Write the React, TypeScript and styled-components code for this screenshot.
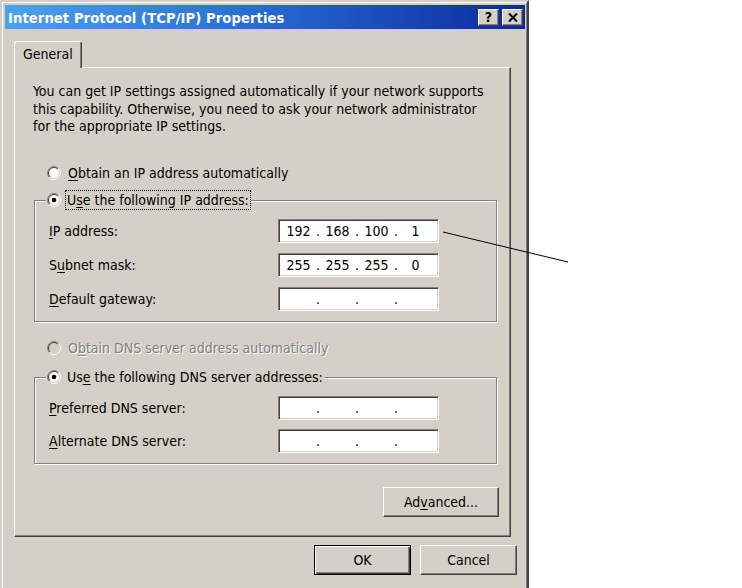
import React from 'react';
import styled, { createGlobalStyle } from 'styled-components';

const GlobalStyle = createGlobalStyle`
  html, body {
    margin: 0;
    padding: 0;
    background: #fff;
    overflow: hidden;
  }
  body {
    font-family: "DejaVu Sans Condensed", "DejaVu Sans", sans-serif;
    font-size: 14px;
    color: #000;
  }
`;

const Page = styled.div`
  position: relative;
  width: 742px;
  height: 588px;
  overflow: hidden;
  background: #fff;
`;

const Window = styled.div`
  box-sizing: border-box;
  width: 529px;
  height: 600px;
  display: flex;
  flex-direction: column;
  background: #d4d0c8;
  border: 2px solid;
  border-color: #d4d0c8 #404040 #404040 #d4d0c8;
  box-shadow: inset 1px 1px #fff, inset -1px -1px #808080;
  padding: 3px 2px 0 3px;
`;

const TitleBar = styled.div`
  height: 24px;
  display: flex;
  align-items: center;
  justify-content: space-between;
  padding: 0 2px 0 3px;
  background: linear-gradient(90deg, #4ba2ea 0%, #2b6fd4 45%, #0a2a9c 100%);
`;

const Title = styled.div`
  color: #fff;
  font-weight: bold;
  font-size: 14.6px;
  letter-spacing: 0.1px;
`;

const TitleButtons = styled.div`
  display: flex;
  gap: 3px;
`;

const CaptionButton = styled.div`
  box-sizing: border-box;
  width: 21px;
  height: 17px;
  display: flex;
  align-items: center;
  justify-content: center;
  background: #d4d0c8;
  border: 1px solid;
  border-color: #fff #404040 #404040 #fff;
  box-shadow: inset -1px -1px #808080;
  font-weight: bold;
  font-size: 14px;
  line-height: 1;
`;

const Body = styled.div`
  display: flex;
  flex-direction: column;
  padding: 12px 0 0 9px;
`;

const TabStrip = styled.div`
  display: flex;
  position: relative;
  z-index: 1;
`;

const Tab = styled.div`
  box-sizing: border-box;
  width: 68px;
  height: 27px;
  margin-bottom: -1px;
  padding: 3px 0 0 8px;
  line-height: 18px;
  background: #d4d0c8;
  border: 1px solid;
  border-bottom: none;
  border-color: #fff #404040 transparent #fff;
  border-top-left-radius: 3px;
  border-top-right-radius: 2px;
  box-shadow: inset -1px 0 #808080;
`;

const TabPanel = styled.div`
  box-sizing: border-box;
  width: 497px;
  display: flex;
  flex-direction: column;
  align-items: flex-start;
  padding: 15px 12px 19px 18px;
  border: 1px solid;
  border-color: #fff #404040 #404040 #fff;
  box-shadow: inset -1px -1px #808080;
`;

const Intro = styled.p`
  margin: 0;
  line-height: 17.5px;
`;

const RadioRow = styled.div<{ $top: number; $disabled?: boolean }>`
  display: flex;
  align-items: center;
  gap: 7px;
  height: 18px;
  margin: ${(p) => p.$top}px 0 0 14px;
  color: ${(p) => (p.$disabled ? '#808080' : '#000')};
  text-shadow: ${(p) => (p.$disabled ? '1px 1px #fff' : 'none')};
`;

const Group = styled.div<{ $top: number; $gap: number }>`
  position: relative;
  box-sizing: border-box;
  width: 463px;
  margin: ${(p) => p.$top}px 0 0 1px;
  padding: 18px 0 10px 14px;
  border: 1px solid #808080;
  box-shadow: inset 1px 1px #fff, 1px 1px #fff;
  display: grid;
  grid-template-columns: 229px 161px;
  row-gap: ${(p) => p.$gap}px;
  align-items: center;
`;

const Legend = styled.div`
  position: absolute;
  top: -11px;
  left: 11px;
  height: 20px;
  display: flex;
  align-items: center;
  gap: 4px;
  padding: 0 0 0 1px;
  background: #d4d0c8;
`;

const LegendText = styled.span<{ $focused?: boolean }>`
  box-sizing: border-box;
  height: 20px;
  line-height: 18px;
  padding: 0 1px;
  border: 1px dotted ${(p) => (p.$focused ? '#000' : 'transparent')};
`;

const Label = styled.div`
  line-height: 18px;
`;

const IpField = styled.div`
  box-sizing: border-box;
  width: 161px;
  height: 24px;
  display: flex;
  align-items: center;
  padding-left: 3px;
  background: #fff;
  border: 1px solid;
  border-color: #808080 #fff #fff #808080;
  box-shadow: inset 1px 1px #404040, inset -1px -1px #d4d0c8;
`;

const Octet = styled.span`
  width: 33px;
  text-align: center;
`;

const Dot = styled.span`
  width: 6px;
  text-align: center;
`;

const Button = styled.div<{ $width: number; $default?: boolean }>`
  box-sizing: border-box;
  width: ${(p) => p.$width}px;
  height: 30px;
  display: flex;
  align-items: center;
  justify-content: center;
  background: #d4d0c8;
  border: 1px solid;
  border-color: ${(p) => (p.$default ? '#000' : '#fff #404040 #404040 #fff')};
  box-shadow: ${(p) =>
    p.$default
      ? 'inset 1px 1px #fff, inset -1px -1px #404040, inset -2px -2px #808080'
      : 'inset -1px -1px #808080'};
`;

const AdvancedButton = styled(Button)`
  align-self: flex-end;
  margin-top: 23px;
  margin-right: -1px;
`;

const ButtonRow = styled.div`
  display: flex;
  justify-content: flex-end;
  gap: 9px;
  margin: 8px 8px 0 0;
`;

const Key = styled.span`
  text-decoration: underline;
  text-underline-offset: 2px;
`;

const Overlay = styled.svg`
  position: absolute;
  inset: 0;
  pointer-events: none;
`;

const Radio = ({ checked, disabled }: { checked?: boolean; disabled?: boolean }) => (
  <svg width="14" height="14" viewBox="0 0 14 14">
    <circle cx="7" cy="7" r="5.5" fill={disabled ? '#d4d0c8' : '#fff'} />
    <path d="M2.4 11.6 A6.5 6.5 0 0 1 11.6 2.4" fill="none" stroke="#808080" />
    <path d="M11.6 2.4 A6.5 6.5 0 0 1 2.4 11.6" fill="none" stroke="#fff" />
    <path d="M3.1 10.9 A5.5 5.5 0 0 1 10.9 3.1" fill="none" stroke="#404040" />
    <path d="M10.9 3.1 A5.5 5.5 0 0 1 3.1 10.9" fill="none" stroke="#d4d0c8" />
    {checked && <circle cx="7" cy="7" r="2.3" fill="#000" />}
  </svg>
);

const Ip = ({ value }: { value: string[] }) => (
  <IpField>
    {value.map((o, i) => (
      <React.Fragment key={i}>
        <Octet>{o}</Octet>
        {i < 3 && <Dot>.</Dot>}
      </React.Fragment>
    ))}
  </IpField>
);

const empty = ['', '', '', ''];

const App = () => {
  return (
    <Page>
      <GlobalStyle />
      <Window>
        <TitleBar>
          <Title>Internet Protocol (TCP/IP) Properties</Title>
          <TitleButtons>
            <CaptionButton>?</CaptionButton>
            <CaptionButton>
              <svg width="10" height="9" viewBox="0 0 10 9">
                <path d="M1 0.5 L9 8.5 M9 0.5 L1 8.5" stroke="#000" strokeWidth="2" />
              </svg>
            </CaptionButton>
          </TitleButtons>
        </TitleBar>
        <Body>
          <TabStrip>
            <Tab>General</Tab>
          </TabStrip>
          <TabPanel>
            <Intro>
              You can get IP settings assigned automatically if your network supports
              <br />
              this capability. Otherwise, you need to ask your network administrator
              <br />
              for the appropriate IP settings.
            </Intro>
            <RadioRow $top={28.5}>
              <Radio />
              <span>
                <Key>O</Key>btain an IP address automatically
              </span>
            </RadioRow>
            <Group $top={18} $gap={10}>
              <Legend>
                <Radio checked />
                <LegendText $focused>
                  U<Key>s</Key>e the following IP address:
                </LegendText>
              </Legend>
              <Label>
                <Key>I</Key>P address:
              </Label>
              <Ip value={['192', '168', '100', '1']} />
              <Label>
                S<Key>u</Key>bnet mask:
              </Label>
              <Ip value={['255', '255', '255', '0']} />
              <Label>
                <Key>D</Key>efault gateway:
              </Label>
              <Ip value={empty} />
            </Group>
            <RadioRow $top={17} $disabled>
              <Radio disabled />
              <span>
                O<Key>b</Key>tain DNS server address automatically
              </span>
            </RadioRow>
            <Group $top={20} $gap={9}>
              <Legend>
                <Radio checked />
                <LegendText>
                  Us<Key>e</Key> the following DNS server addresses:
                </LegendText>
              </Legend>
              <Label>
                <Key>P</Key>referred DNS server:
              </Label>
              <Ip value={empty} />
              <Label>
                <Key>A</Key>lternate DNS server:
              </Label>
              <Ip value={empty} />
            </Group>
            <AdvancedButton $width={116}>
              <span>
                Ad<Key>v</Key>anced...
              </span>
            </AdvancedButton>
          </TabPanel>
          <ButtonRow>
            <Button $width={97} $default>
              OK
            </Button>
            <Button $width={97}>Cancel</Button>
          </ButtonRow>
        </Body>
      </Window>
      <Overlay width="742" height="588">
        <line x1="443" y1="232" x2="568" y2="262" stroke="#000" strokeWidth="1" />
      </Overlay>
    </Page>
  );
};

export default App;
